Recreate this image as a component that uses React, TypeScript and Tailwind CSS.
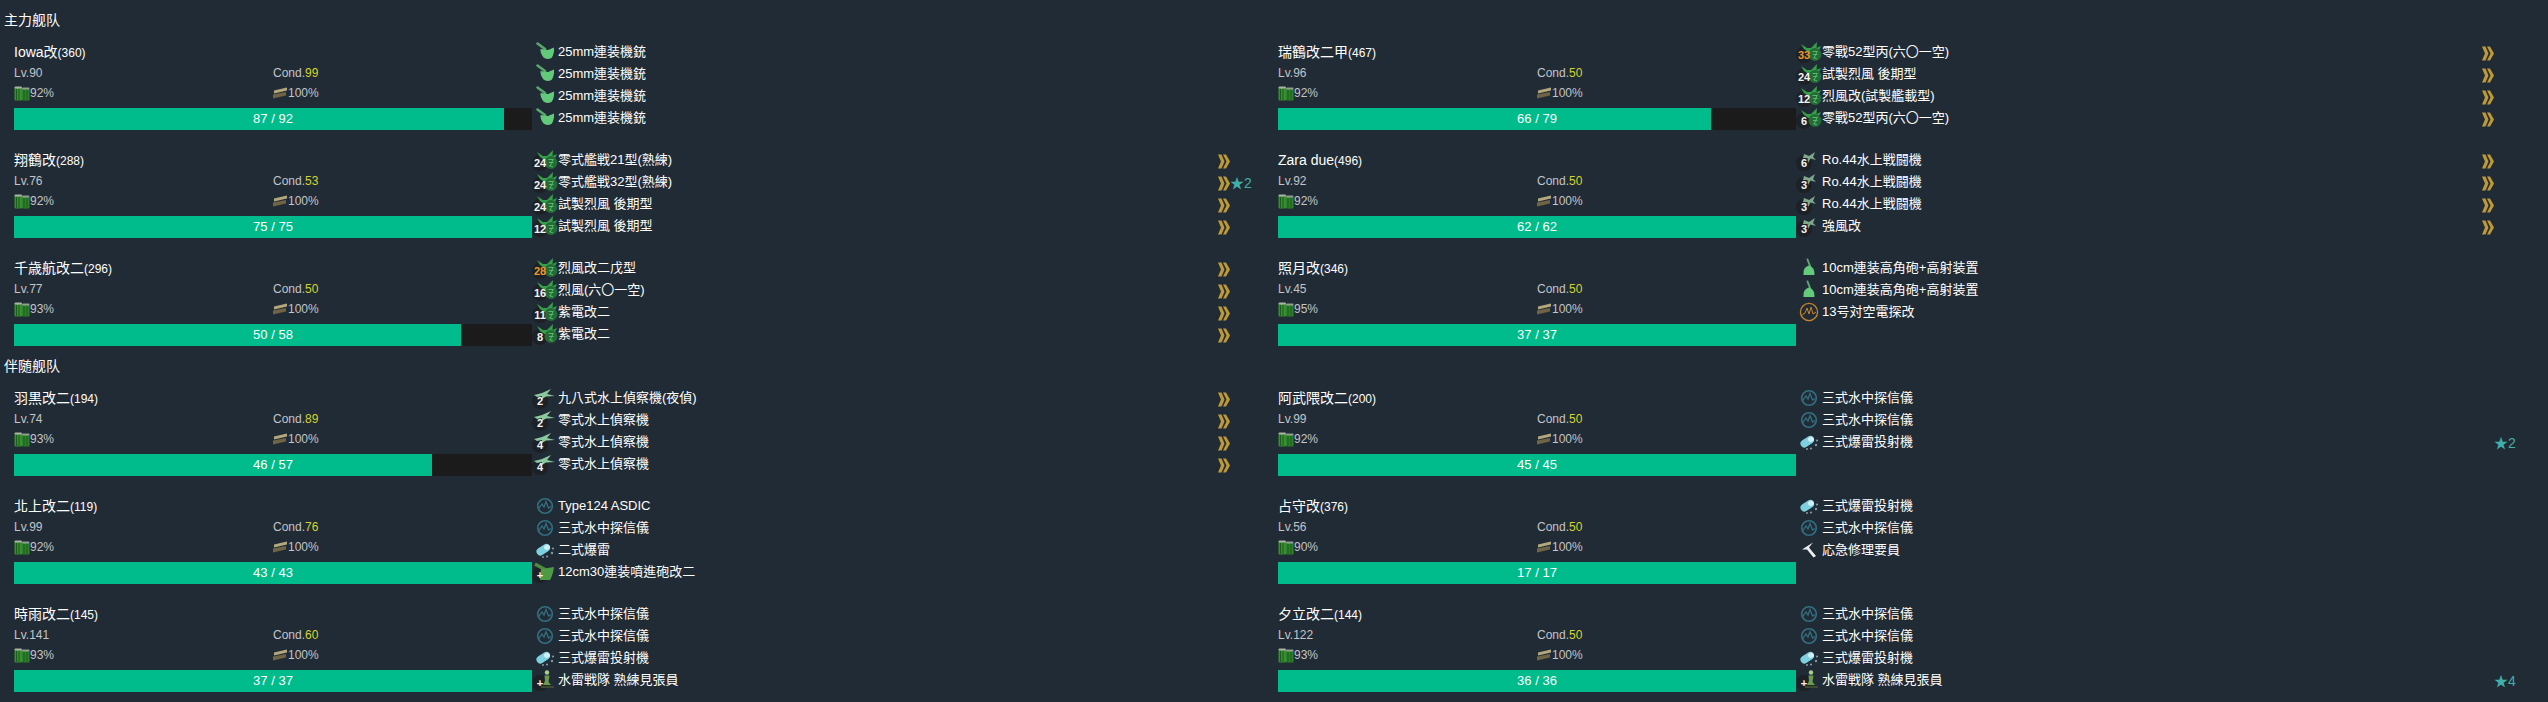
import React from "react";

type Kind = "gun" | "fighter" | "seaFighter" | "seaRecon" | "sonar" | "depth" | "lookout" | "repair" | "radar" | "ha" | "rocket";
type Eq = { k: Kind; n: string; c?: string; hot?: boolean; chev?: boolean; star?: number };
type Ship = { name: string; id: number; lv: number; cond: number; fuel: number; hp: number; max: number; eq: Eq[] };

const g25: Eq = { k: "gun", n: "25mm連装機銃" };
const sonar: Eq = { k: "sonar", n: "三式水中探信儀" };
const depth: Eq = { k: "depth", n: "三式爆雷投射機" };
const f = (n: string, c: string, extra: Partial<Eq> = {}): Eq => ({ k: "fighter", n, c, chev: true, ...extra });
const sf = (n: string, c: string): Eq => ({ k: "seaFighter", n, c, chev: true });
const sr = (n: string, c: string): Eq => ({ k: "seaRecon", n, c, chev: true });
const look: Eq = { k: "lookout", n: "水雷戦隊 熟練見張員", c: "+" };

const main: Ship[] = [
  { name: "Iowa改", id: 360, lv: 90, cond: 99, fuel: 92, hp: 87, max: 92, eq: [g25, g25, g25, g25] },
  { name: "瑞鶴改二甲", id: 467, lv: 96, cond: 50, fuel: 92, hp: 66, max: 79, eq: [f("零戰52型丙(六〇一空)", "33", { hot: true }), f("試製烈風 後期型", "24"), f("烈風改(試製艦載型)", "12"), f("零戰52型丙(六〇一空)", "6")] },
  { name: "翔鶴改", id: 288, lv: 76, cond: 53, fuel: 92, hp: 75, max: 75, eq: [f("零式艦戦21型(熟練)", "24"), f("零式艦戦32型(熟練)", "24", { star: 2 }), f("試製烈風 後期型", "24"), f("試製烈風 後期型", "12")] },
  { name: "Zara due", id: 496, lv: 92, cond: 50, fuel: 92, hp: 62, max: 62, eq: [sf("Ro.44水上戦闘機", "6"), sf("Ro.44水上戦闘機", "3"), sf("Ro.44水上戦闘機", "3"), sf("強風改", "3")] },
  { name: "千歳航改二", id: 296, lv: 77, cond: 50, fuel: 93, hp: 50, max: 58, eq: [f("烈風改二戊型", "28", { hot: true }), f("烈風(六〇一空)", "16"), f("紫電改二", "11"), f("紫電改二", "8")] },
  { name: "照月改", id: 346, lv: 45, cond: 50, fuel: 95, hp: 37, max: 37, eq: [{ k: "ha", n: "10cm連装高角砲+高射装置" }, { k: "ha", n: "10cm連装高角砲+高射装置" }, { k: "radar", n: "13号対空電探改" }] },
];
const escort: Ship[] = [
  { name: "羽黒改二", id: 194, lv: 74, cond: 89, fuel: 93, hp: 46, max: 57, eq: [sr("九八式水上偵察機(夜偵)", "2"), sr("零式水上偵察機", "2"), sr("零式水上偵察機", "4"), sr("零式水上偵察機", "4")] },
  { name: "阿武隈改二", id: 200, lv: 99, cond: 50, fuel: 92, hp: 45, max: 45, eq: [sonar, sonar, { ...depth, star: 2 }] },
  { name: "北上改二", id: 119, lv: 99, cond: 76, fuel: 92, hp: 43, max: 43, eq: [{ k: "sonar", n: "Type124 ASDIC" }, sonar, { k: "depth", n: "二式爆雷" }, { k: "rocket", n: "12cm30連装噴進砲改二", c: "+" }] },
  { name: "占守改", id: 376, lv: 56, cond: 50, fuel: 90, hp: 17, max: 17, eq: [depth, sonar, { k: "repair", n: "応急修理要員" }] },
  { name: "時雨改二", id: 145, lv: 141, cond: 60, fuel: 93, hp: 37, max: 37, eq: [sonar, sonar, depth, look] },
  { name: "夕立改二", id: 144, lv: 122, cond: 50, fuel: 93, hp: 36, max: 36, eq: [sonar, sonar, depth, { ...look, star: 4 }] },
];

function Art({ k }: { k: Kind }) {
  switch (k) {
    case "gun":
      return (
        <g>
          <path d="M5.5 2.5 L13 8" stroke="#5aa86c" strokeWidth="2.6" strokeLinecap="round" />
          <path d="M8.5 8 L16 9 L22 6.5 Q22.5 13 19.5 17 Q14.5 19 11.5 16.5 Q8 12 8.5 8Z" fill="#63c97b" />
        </g>
      );
    case "ha":
      return (
        <g>
          <path d="M11.5 2.5 L14 9" stroke="#5aa86c" strokeWidth="2" strokeLinecap="round" />
          <path d="M7.5 18 Q6.5 10 13 8.5 Q19 10 18.5 18Z" fill="#63c97b" />
        </g>
      );
    case "rocket":
      return (
        <g>
          <path d="M3 3 L13 8.5" stroke="#4c8a3e" strokeWidth="3.5" />
          <path d="M9 8 L22 6 Q21 14 18 19 L8 19Z" fill="#4f9a45" />
        </g>
      );
    case "fighter":
      return (
        <g>
          <path d="M5 3 L11 7 L15 7 L21 1 L20.5 7 L25 5 L22 11 L14 12 L8 8Z" fill="#35a04a" />
          <circle cx="19" cy="13.5" r="6.5" fill="#256b37" />
          <path d="M16.5 10.5 h5 M17 13.5 h4.5 M17.5 16.5 l3.5 1.5 M21 10.5 l-3 7" stroke="#5cc06f" strokeWidth="0.9" fill="none" />
        </g>
      );
    case "seaFighter":
      return (
        <g>
          <path d="M8 5 L13 7 L19 3 L17 8 L20 11 L14.5 9.5 L12 14 L11.5 9 L7 9Z" fill="#7fa88c" />
        </g>
      );
    case "seaRecon":
      return (
        <g>
          <path d="M2 8 L10 6 L19 2 L15 7 L23 9 L14 9.5 L10 12 L10 9 L5 10Z" fill="#8cc79f" />
        </g>
      );
    case "sonar":
      return (
        <g fill="none" stroke="#336f80">
          <circle cx="13" cy="11" r="7.3" strokeWidth="1.6" />
          <path d="M6.5 14 L10 9 L12 12 L14 6.5 L16.5 13 L19 11.5" strokeWidth="1.3" />
        </g>
      );
    case "radar":
      return (
        <g fill="none" stroke="#c4852c">
          <circle cx="13" cy="11" r="8.6" strokeWidth="1.3" />
          <path d="M6 14 L9 12 L11 7 L13 13 L15 6 L17 13 L20 11" strokeWidth="1" />
        </g>
      );
    case "depth":
      return (
        <g>
          <path d="M8.5 12.5 L14 9" stroke="#7dd0df" strokeWidth="8" strokeLinecap="round" />
          <path d="M14.5 8.5 L15.5 8" stroke="#cfeef3" strokeWidth="5" strokeLinecap="round" />
          <g fill="#7f9aa3">
            <circle cx="21" cy="9.5" r="1.1" />
            <circle cx="20" cy="14" r="1.2" />
            <circle cx="15" cy="17.5" r="1.1" />
            <circle cx="11" cy="18" r="1" />
          </g>
        </g>
      );
    case "lookout":
      return (
        <g>
          <circle cx="15" cy="3.5" r="2.2" fill="#a7d08a" />
          <path d="M12.5 6.5 H17.5 L16.5 13 L19 16 H11 L13 12Z" fill="#6c9a4f" />
          <path d="M9 18 H22" stroke="#3f4a33" strokeWidth="2" />
        </g>
      );
    case "repair":
      return (
        <g>
          <path d="M6 10.5 L17 3.5 L13 8.5 L20 17 L17.5 18.5 L11 10.5 Z" fill="#eceff0" />
        </g>
      );
  }
}

function Icon({ e }: { e: Eq }) {
  return (
    <div className="relative h-[22px] w-[26px] shrink-0">
      {e.c && <span className="absolute left-0 top-[5px] size-4 rounded-full bg-[#1d2125]" />}
      <svg width="26" height="22" viewBox="0 0 26 22" className="absolute left-0 top-0 -translate-y-px">
        <Art k={e.k} />
      </svg>
      {e.c && (
        <span
          className={`absolute left-0 top-[5px] flex h-4 w-4 items-center justify-center text-[11px] font-bold leading-none ${
            e.hot ? "text-[#f0952a]" : "text-[#f4f4f4]"
          }`}
        >
          {e.c}
        </span>
      )}
    </div>
  );
}

function Chevron() {
  return (
    <svg width="12" height="15" viewBox="0 0 12 15">
      <path d="M0 0.5 H3.5 L6.5 7.5 L3.5 14.5 H0 L3 7.5Z M5 0.5 H8 L12 7.5 L8 14.5 H5 L8.5 7.5Z" fill="#bd9a35" />
    </svg>
  );
}

function EqRow({ e }: { e: Eq }) {
  return (
    <div className="grid h-[22px] grid-cols-[686px_12px_1fr] items-center">
      <div className="flex items-center text-[13px] text-white">
        <Icon e={e} />
        <span className="-translate-y-px whitespace-nowrap">{e.n}</span>
      </div>
      <div className="flex items-center">{e.chev && <Chevron />}</div>
      {e.star ? <span className="text-[14px] text-[#3fb0a8]">★{e.star}</span> : <span />}
    </div>
  );
}

function Fuel() {
  return (
    <svg width="16" height="15" viewBox="0 0 16 15" className="shrink-0">
      <rect x="0.5" y="1" width="7.5" height="13.5" rx="1" fill="#35912f" />
      <rect x="8" y="2" width="7.5" height="12.5" rx="1" fill="#2f822b" />
      <path d="M2.5 3 V14 M5 3 V14 M10 4 V14 M13 4 V14" stroke="#174d16" strokeWidth="0.8" />
      <rect x="0.5" y="0.5" width="7.5" height="2" rx="1" fill="#a9b2a4" />
      <rect x="8" y="1.5" width="7.5" height="2" rx="1" fill="#939c90" />
    </svg>
  );
}

function Ammo() {
  return (
    <svg width="15" height="12" viewBox="0 0 15 12" className="shrink-0">
      <path d="M1 3.5 L14 0.5 V3.5 L1 6.5Z" fill="#b4a77c" />
      <path d="M0 7.5 L13 5 V8.5 L0 11.5Z" fill="#6f6444" />
    </svg>
  );
}

function ShipCard({ s }: { s: Ship }) {
  return (
    <div className="flex pl-3.5">
      <div className="w-[518px] shrink-0">
        <div className="flex h-[21px] items-center whitespace-nowrap text-[14px] text-white">
          {s.name}
          <span className="text-[12px]">({s.id})</span>
        </div>
        <div className="grid h-[19px] grid-cols-2 items-center text-[12px] text-[#c2c5c9]">
          <span>Lv.{s.lv}</span>
          <span>
            Cond.<span className="text-[#d4d42f]">{s.cond}</span>
          </span>
        </div>
        <div className="mb-1 grid h-[22px] grid-cols-2 items-center text-[12px] text-[#c2c5c9]">
          <span className="flex items-center">
            <Fuel />
            {s.fuel}%
          </span>
          <span className="flex items-center">
            <Ammo />
            100%
          </span>
        </div>
        <div className="relative h-[22px] bg-[#1b1b1b]">
          <div className="h-full bg-[#00bc8c]" style={{ width: `${(s.hp / s.max) * 100}%` }} />
          <span className="absolute inset-0 flex items-center justify-center text-[13px] text-white">
            {s.hp} / {s.max}
          </span>
        </div>
      </div>
      <div className="flex-1">
        {s.eq.map((e, i) => (
          <EqRow key={i} e={e} />
        ))}
      </div>
    </div>
  );
}

function Fleet({ title, ships }: { title: string; ships: Ship[] }) {
  return (
    <section>
      <h2 className="mb-[11px] h-[21px] pl-1 text-[14px] font-normal leading-[21px] text-white">{title}</h2>
      <div className="grid grid-cols-[1264px_1264px] gap-y-5">
        {ships.map((s) => (
          <ShipCard key={s.id} s={s} />
        ))}
      </div>
    </section>
  );
}

export default function App() {
  return (
    <div className="flex min-h-screen flex-col gap-2.5 bg-[#212b35] pt-2.5 font-['Liberation_Sans','Noto_Sans_CJK_TC',sans-serif]">
      <Fleet title="主力舰队" ships={main} />
      <Fleet title="伴随舰队" ships={escort} />
    </div>
  );
}
